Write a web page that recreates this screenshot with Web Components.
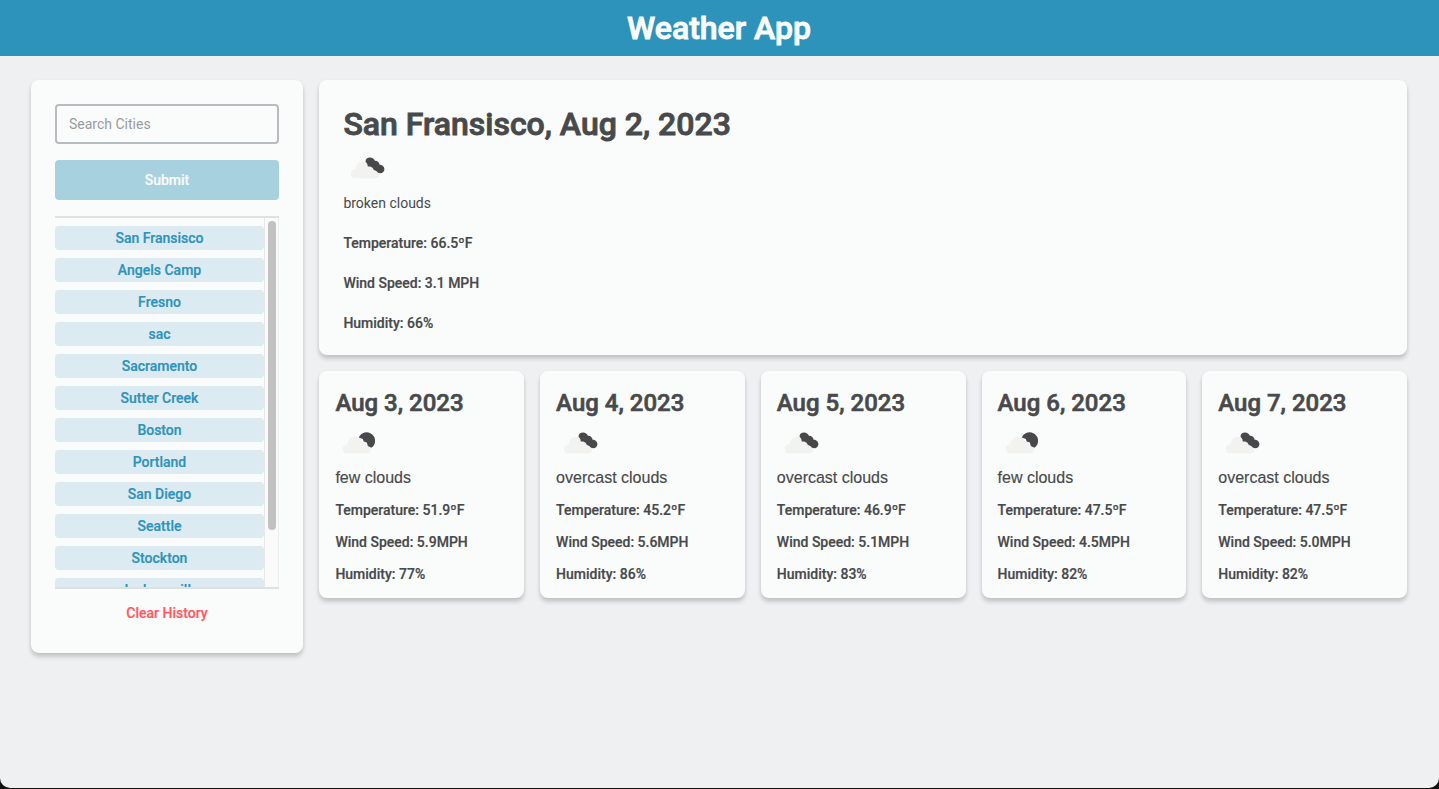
<!DOCTYPE html>
<html lang="en">
<head>
<meta charset="utf-8">
<title>Weather App</title>
<style>
html,body{margin:0;height:100%;background:#111}
body{font-family:Roboto,"Liberation Sans",sans-serif;color:#48494b;overflow:hidden}
</style>
</head>
<body>
<weather-app></weather-app>
<script>
const define = (name, html) => customElements.define(name, class extends HTMLElement {
  constructor() {
    super();
    this.attachShadow({ mode: 'open' });
  }
  connectedCallback() {
    const t = document.createElement('template');
    t.innerHTML = typeof html === 'function' ? html(this) : html;
    this.shadowRoot.replaceChildren(t.content.cloneNode(true));
  }
});

define('app-header', `<style>
:host{display:block;background:#2d93ba;color:#fafcfb;height:56px;text-align:center}
h1{margin:0 1px 0 0;font-size:32px;line-height:56px;font-weight:500;-webkit-text-stroke:.9px currentColor}
</style><h1><slot></slot></h1>`);

define('ui-card', `<style>
:host{display:block;box-sizing:border-box;background:#fafcfb;border-radius:8px;box-shadow:0 4px 4px rgba(0,0,0,.16),0 1px 4px rgba(0,0,0,.06)}
</style><slot></slot>`);

define('city-item', `<style>
:host{display:block;flex:none;height:24px;line-height:24px;border-radius:4px;background:#dceaf1;color:#2d93ba;text-align:center;font-size:14px;font-weight:500;-webkit-text-stroke:.2px currentColor}
</style><slot></slot>`);

define('city-list', `<style>
:host{display:flex;box-sizing:border-box;height:373px;border-top:2px solid #dfe1e1;border-bottom:2px solid #dfe1e1;overflow:hidden}
.items{flex:1;display:flex;flex-direction:column;gap:8px;padding-top:8px}
.track{box-sizing:border-box;width:15px;background:#fafafa;border-left:1px solid #e8e8e8;border-right:1px solid #ededed;padding:3px 2px 0 3px}
.thumb{width:8px;height:309px;border-radius:4px;background:#c1c1c1}
</style><div class="items"><slot></slot></div><div class="track"><div class="thumb"></div></div>`);

define('search-panel', `<style>
:host{display:block}
ui-card{height:573px;padding:24px}
input{display:block;box-sizing:border-box;width:100%;height:40px;border:2px solid #b5bdc0;border-radius:4px;padding:0 12px;background:transparent;font:14px Roboto,sans-serif;outline:0}
input::placeholder{color:#999b9d;opacity:1}
button{display:block;width:100%;border:0;padding:0;font:500 14px Roboto,sans-serif;-webkit-text-stroke:.2px currentColor}
.submit{height:40px;margin:16px 0;border-radius:4px;background:#a7d1df;color:#fafcfb}
.clear{height:24px;margin-top:12px;background:none;color:#ff5a5f}
</style><ui-card><input placeholder="Search Cities"><button class="submit">Submit</button>
<city-list>${['San Fransisco','Angels Camp','Fresno','sac','Sacramento','Sutter Creek','Boston','Portland','San Diego','Seattle','Stockton','Jacksonville'].map(c=>`<city-item>${c}</city-item>`).join('')}</city-list>
<button class="clear">Clear History</button></ui-card>`);

define('cloud-icon', el => `<style>
:host{display:block}svg{display:block}
</style><svg width="50" height="48" viewBox="-0.2 0.8 50 48">
<path fill="#f2f2f1" d="M12.200 35.200C9.500 35.200 7.500 33.400 7.500 30.700c0-2.800 2.300-4.700 5-4.700.2-4.400 3.100-7.400 7.300-7.400 3.500 0 5.900 1.900 6.700 4.700 3-.3 5 1.500 5 4.200 2.800 0 4.700 1.700 4.500 4.100-.2 2.400-1.800 3.600-4.500 3.600z"/>
${el.getAttribute('kind') === 'few'
 ? '<path fill="#48484a" d="M23.600 19.200a8.500 8.500 0 1 1 12.600 10.400l-3.600-1.800-1-3.400-3.100-1.100-.9-2.400z"/>'
 : '<path fill="#48484a" d="M22.300 18.300c.1-2.400 1.900-4 4.500-4 2.400 0 4.200 1.300 4.900 3.300 2.500-.2 4.500 1.600 4.700 4 2.600 0 4.900 1.900 4.800 4.500 0 2.400-1.700 3.900-4 3.900-1.700 0-3.100-.6-3.800-1.900l-2.900-1.500-1.100-2.100-2.500-1.300-2.300.2-.5-2.600z"/>'}
</svg>`);

define('weather-today', `<style>
:host{display:block}
ui-card{height:275px;padding:24px}
h2{margin:0;font-size:32px;line-height:40px;font-weight:500;-webkit-text-stroke:.9px currentColor}
cloud-icon{height:47px}
p{margin:0 0 16px;font-size:14px;line-height:24px}
.stat{font-weight:500;-webkit-text-stroke:.2px currentColor}
</style><ui-card><h2>San Fransisco, Aug 2, 2023</h2><cloud-icon></cloud-icon><p>broken clouds</p>
<p class="stat">Temperature: 66.5ºF</p><p class="stat">Wind Speed: 3.1 MPH</p><p class="stat">Humidity: 66%</p></ui-card>`);

define('forecast-day', el => `<style>
:host{display:block}
ui-card{height:227px;padding:16px}
h3{margin:0;font-size:24px;line-height:32px;font-weight:500;-webkit-text-stroke:.6px currentColor}
cloud-icon{height:47px}
p{margin:0 0 8px;font-size:14px;line-height:24px;font-weight:500;-webkit-text-stroke:.2px currentColor}
.desc{font:16px/24px "Liberation Sans",Arial,sans-serif;-webkit-text-stroke:.15px currentColor}
</style><ui-card><h3>${el.getAttribute('date')}</h3><cloud-icon kind="${el.getAttribute('kind')}"></cloud-icon>
<p class="desc">${el.getAttribute('kind')} clouds</p><p>Temperature: ${el.getAttribute('temp')}ºF</p><p>Wind Speed: ${el.getAttribute('wind')}MPH</p><p>Humidity: ${el.getAttribute('humidity')}%</p></ui-card>`);

define('weather-app', `<style>
:host{display:block;box-sizing:border-box;height:788px;background:#eff0f2;border-radius:0 0 10px 10px;overflow:hidden}
main{display:grid;grid-template-columns:272px 1fr;gap:16.4px;padding:24px 32px 0 31px;align-items:start}
section{display:grid;gap:16px}
.days{display:grid;grid-template-columns:repeat(5,1fr);gap:16px}
</style><app-header>Weather App</app-header><main><search-panel></search-panel><section><weather-today></weather-today><div class="days">
<forecast-day date="Aug 3, 2023" kind="few" temp="51.9" wind="5.9" humidity="77"></forecast-day>
<forecast-day date="Aug 4, 2023" kind="overcast" temp="45.2" wind="5.6" humidity="86"></forecast-day>
<forecast-day date="Aug 5, 2023" kind="overcast" temp="46.9" wind="5.1" humidity="83"></forecast-day>
<forecast-day date="Aug 6, 2023" kind="few" temp="47.5" wind="4.5" humidity="82"></forecast-day>
<forecast-day date="Aug 7, 2023" kind="overcast" temp="47.5" wind="5.0" humidity="82"></forecast-day>
</div></section></main>`);
</script>
</body>
</html>
